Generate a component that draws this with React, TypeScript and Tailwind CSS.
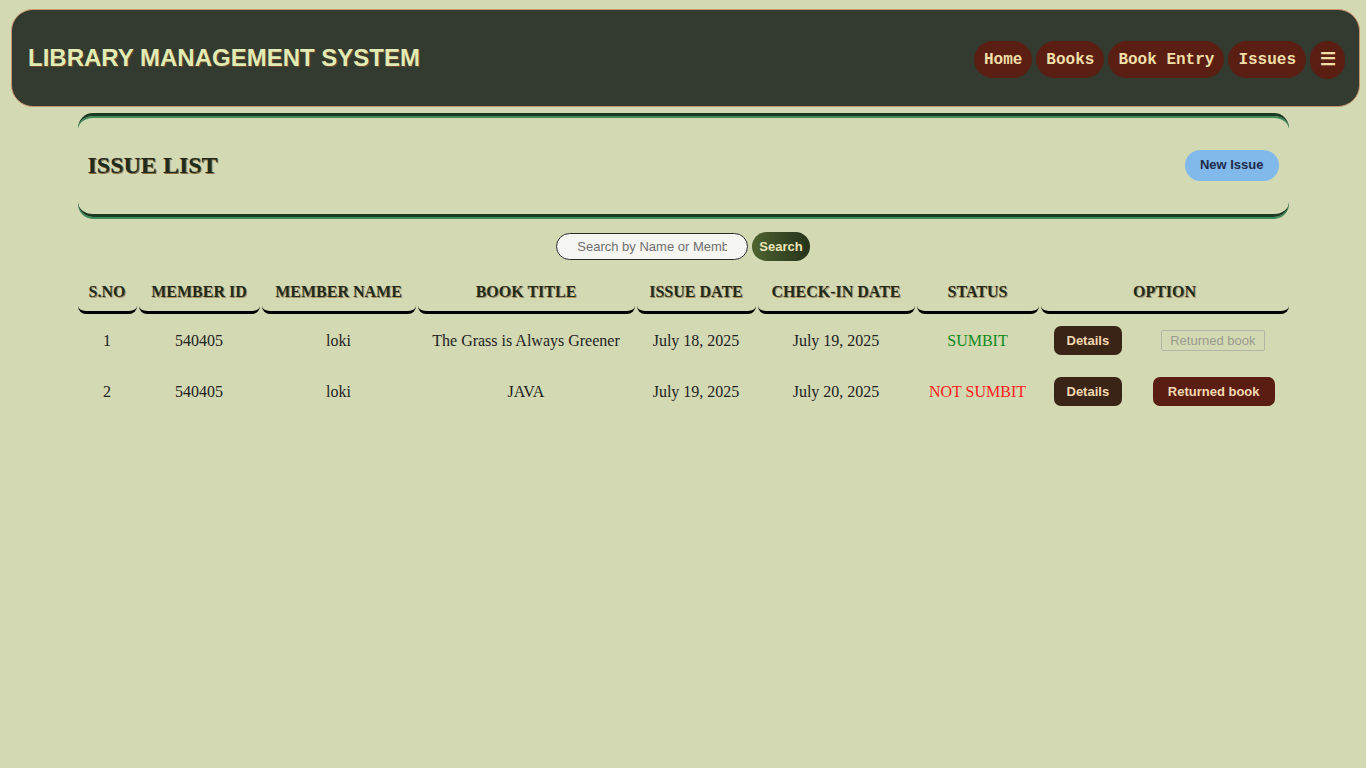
import { useState } from "react";

type Issue = {
  id: number;
  memberId: string;
  name: string;
  title: string;
  issueDate: string;
  checkIn: string;
  returned: boolean;
};

const issues: Issue[] = [
  {
    id: 1,
    memberId: "540405",
    name: "loki",
    title: "The Grass is Always Greener",
    issueDate: "July 18, 2025",
    checkIn: "July 19, 2025",
    returned: true,
  },
  {
    id: 2,
    memberId: "540405",
    name: "loki",
    title: "JAVA",
    issueDate: "July 19, 2025",
    checkIn: "July 20, 2025",
    returned: false,
  },
];

const headers = [
  { label: "S.NO", w: "w-[59px]" },
  { label: "MEMBER ID", w: "w-[121px]" },
  { label: "MEMBER NAME", w: "w-[154px]" },
  { label: "BOOK TITLE", w: "w-[217px]" },
  { label: "ISSUE DATE", w: "w-[119px]" },
  { label: "CHECK-IN DATE", w: "w-[157px]" },
  { label: "STATUS", w: "w-[122px]" },
  { label: "OPTION", w: "" },
];

const navLinks = ["Home", "Books", "Book Entry", "Issues"];

const App = () => {
  const [query, setQuery] = useState("");

  return (
    <div className="min-h-screen bg-[#d3d9b3] pt-[9px] font-['Liberation_Serif',serif]">
      <header className="ml-[11px] mr-[6px] flex h-[98px] items-center justify-between rounded-[22px] border border-[#c7946a] bg-[#333a30] pl-[16px] pr-[14px]">
        <h1 className="font-['Liberation_Sans',Arial,sans-serif] text-[24px] font-bold text-[#e2ecb2] [text-shadow:1px_1px_0_#6a4a30]">
          LIBRARY MANAGEMENT SYSTEM
        </h1>
        <nav className="flex items-center gap-[4px] pt-[3px]">
          {navLinks.map((link) => (
            <button
              key={link}
              className="h-[37px] rounded-full bg-[#5a1f12] px-[10px] font-['Liberation_Mono','Courier_New',monospace] text-[16px] font-bold text-[#f2dfa8]"
            >
              {link}
            </button>
          ))}
          <button className="h-[38px] w-[35px] rounded-full bg-[#5a1f12] font-['Liberation_Sans',sans-serif] text-[18px] font-bold text-[#f2dfa8]">
            ☰
          </button>
        </nav>
      </header>

      <main className="mx-auto mt-[6px] w-[1211px]">
        <div className="flex h-[104px] items-center justify-between rounded-[15px] border-y-[3px] border-[#1b3a24] pl-[10px] pr-[10px] shadow-[inset_0_2px_0_#3d8a5a,0_2px_0_#3d8a5a]">
          <h2 className="text-[24px] font-bold text-[#1f2c1d] [text-shadow:1px_1px_0_#8a7040]">
            ISSUE LIST
          </h2>
          <button className="h-[31px] rounded-full bg-[#80b9ea] px-[15px] font-['Liberation_Sans',Arial,sans-serif] text-[13px] font-bold text-[#1e2a4a]">
            New Issue
          </button>
        </div>

        <div className="mt-[15px] flex items-center justify-center gap-[4px]">
          <input
            value={query}
            onChange={(e) => setQuery(e.target.value)}
            placeholder="Search by Name or Member ID"
            className="h-[27px] w-[192px] rounded-full border border-[#2a2a2a] bg-[#f5f5f2] px-[20px] text-center font-['Liberation_Sans',Arial,sans-serif] text-[13px] text-[#333] outline-none placeholder:text-[#707070]"
          />
          <button className="h-[29px] rounded-full bg-gradient-to-r from-[#4e6430] to-[#26331a] px-[7px] font-['Liberation_Sans',Arial,sans-serif] text-[13px] font-bold text-[#ece4b8]">
            Search
          </button>
        </div>

        <table className="-mx-[2px] mt-[10px] w-[1215px] border-separate border-spacing-x-[2px] border-spacing-y-0">
          <thead>
            <tr>
              {headers.map((h) => (
                <th
                  key={h.label}
                  className={`${h.w} h-[43px] rounded-b-[8px] border-b-[3px] border-black pt-[1px] text-center text-[16px] font-bold text-[#1f2c1d] [text-shadow:1px_1px_0_#a89060]`}
                >
                  {h.label}
                </th>
              ))}
            </tr>
          </thead>
          <tbody className="text-[16px] text-[#222]">
            {issues.map((row) => (
              <tr key={row.id} className="h-[51px] text-center">
                <td className="pt-[2px]">{row.id}</td>
                <td className="pt-[2px]">{row.memberId}</td>
                <td className="pt-[2px]">{row.name}</td>
                <td className="pt-[2px]">{row.title}</td>
                <td className="pt-[2px]">{row.issueDate}</td>
                <td className="pt-[2px]">{row.checkIn}</td>
                <td
                  className={
                    row.returned
                      ? "pt-[2px] text-[#0f8a1a]"
                      : "pt-[2px] text-[#ff1a1a]"
                  }
                >
                  {row.returned ? "SUMBIT" : "NOT SUMBIT"}
                </td>
                <td className="pt-[2px]">
                  <div className="flex items-center justify-between pl-[13px] pr-[14px] font-['Liberation_Sans',Arial,sans-serif] text-[13px] font-bold">
                    <button className="h-[29px] rounded-[7px] bg-[#3a2416] px-[13px] text-[#f4d9b2]">
                      Details
                    </button>
                    {row.returned ? (
                      <button
                        disabled
                        className="mr-[10px] h-[21px] rounded-[2px] border border-[#b5b5a5] px-[8px] font-normal text-[#9a9a8e]"
                      >
                        Returned book
                      </button>
                    ) : (
                      <button className="h-[29px] rounded-[7px] bg-[#5a1d12] px-[15px] text-[#f4d9b2]">
                        Returned book
                      </button>
                    )}
                  </div>
                </td>
              </tr>
            ))}
          </tbody>
        </table>
      </main>
    </div>
  );
};

export default App;
